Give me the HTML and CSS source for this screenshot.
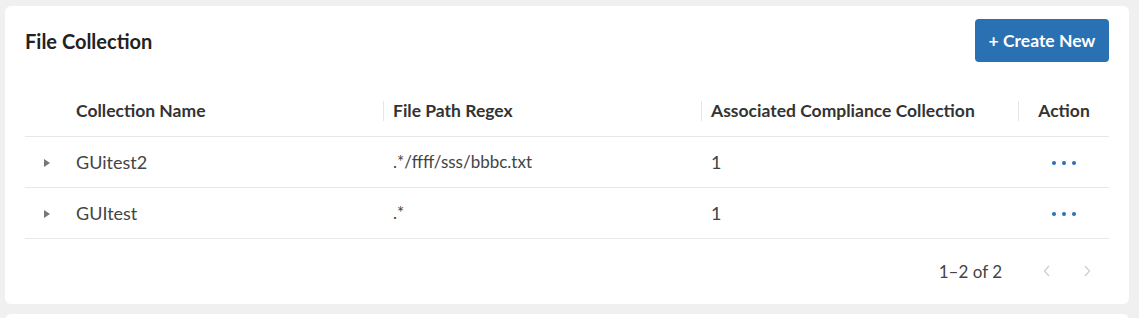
FILE: index.html
```html
<!DOCTYPE html>
<html lang="en">
    <head>
        <meta charset="UTF-8" />
        <meta name="viewport" content="width=device-width, initial-scale=1.0" />
        <title>File Collection</title>
        <link rel="stylesheet" href="styles.css">
    </head>
    <body>
        <div class="page">
            <!-- File collection card -->
            <div class="card">
                <div class="card-header">
                    <h2 class="card-title">File Collection</h2>
                    <button type="button" class="create-button">+ Create New</button>
                </div>
                <!-- Table -->
                <div class="table">
                    <div class="row head">
                        <div class="cell"></div>
                        <div class="cell">Collection Name</div>
                        <div class="cell divided">File Path Regex</div>
                        <div class="cell divided">Associated Compliance Collection</div>
                        <div class="cell divided center">Action</div>
                    </div>
                    <div class="row">
                        <div class="cell expand"><span class="caret"></span></div>
                        <div class="cell">GUitest2</div>
                        <div class="cell regex">.*/ffff/sss/bbbc.txt</div>
                        <div class="cell">1</div>
                        <div class="cell center"><span class="dots"><i></i><i></i><i></i></span></div>
                    </div>
                    <div class="row">
                        <div class="cell expand"><span class="caret"></span></div>
                        <div class="cell">GUItest</div>
                        <div class="cell regex">.*</div>
                        <div class="cell">1</div>
                        <div class="cell center"><span class="dots"><i></i><i></i><i></i></span></div>
                    </div>
                </div>
                <!-- Pagination -->
                <div class="pagination">
                    <span class="page-info">1–2 of 2</span>
                    <button type="button" class="page-arrow" disabled>
                        <svg width="8" height="12" viewBox="0 0 8 12"><path d="M6 1L1.5 6L6 11" fill="none" stroke="#cfcfcf" stroke-width="1.3" /></svg>
                    </button>
                    <button type="button" class="page-arrow" disabled>
                        <svg width="8" height="12" viewBox="0 0 8 12"><path d="M2 1L6.5 6L2 11" fill="none" stroke="#cfcfcf" stroke-width="1.3" /></svg>
                    </button>
                </div>
            </div>
            <div class="card next"></div>
        </div>
    </body>
</html>
```

FILE: styles.css
```css
* {
    margin: 0;
    padding: 0;
    box-sizing: border-box;
}
body {
    background-color: #f0f0f0;
    font-family: Lato, "Open Sans", sans-serif;
    color: #444;
    overflow: hidden;
}
.page {
    padding: 6px 10px 0 5px;
}
/* Card */
.card {
    background-color: white;
    border-radius: 6px;
    padding: 13px 20px 17px 20px;
}
.card.next {
    margin-top: 10px;
    height: 40px;
}
.card-header {
    display: flex;
    align-items: center;
    justify-content: space-between;
    height: 43px;
    margin-bottom: 24px;
}
.card-title {
    font-size: 20px;
    font-weight: 700;
    color: #222;
}
.create-button {
    background-color: #2a71b3;
    color: white;
    border: none;
    border-radius: 4px;
    width: 134px;
    height: 43px;
    font-family: inherit;
    font-size: 17.5px;
    font-weight: 700;
}
/* Table */
.row {
    display: grid;
    grid-template-columns: 41px 317px 318px 317px 1fr;
    height: 51px;
    border-bottom: 1px solid #e8e8e8;
    font-size: 18px;
    line-height: 22px;
}
.row.head {
    font-size: 17.5px;
    font-weight: 700;
    color: #333;
}
.cell {
    display: flex;
    align-items: center;
    padding-left: 10px;
}
.cell.regex {
    font-size: 17px;
}
.cell.divided {
    padding-left: 0;
}
.cell.divided::before {
    content: '';
    width: 1px;
    height: 20px;
    background-color: #e6e6e6;
    margin-right: 9px;
}
.cell.center {
    justify-content: center;
    padding-left: 0;
}
.head .cell.center::before {
    margin-right: auto;
}
.head .cell.center::after {
    content: '';
    margin-left: auto;
}
.cell.expand {
    justify-content: center;
    padding-left: 0;
}
.caret {
    width: 0;
    height: 0;
    border-top: 4.5px solid transparent;
    border-bottom: 4.5px solid transparent;
    border-left: 6px solid #777;
    margin: 2px 0 0 2px;
}
.dots {
    display: flex;
    gap: 6px;
    margin-top: 2px;
}
.dots i {
    width: 4px;
    height: 4px;
    border-radius: 50%;
    background-color: #2a72b5;
}
/* Pagination */
.pagination {
    display: flex;
    align-items: center;
    justify-content: flex-end;
    height: 32px;
    margin-top: 16px;
    padding-right: 2px;
}
.page-info {
    font-size: 17px;
    color: #444;
    margin-right: 25px;
}
.page-arrow {
    width: 40px;
    height: 32px;
    border: none;
    background: none;
    display: flex;
    align-items: center;
    justify-content: center;
}
```
